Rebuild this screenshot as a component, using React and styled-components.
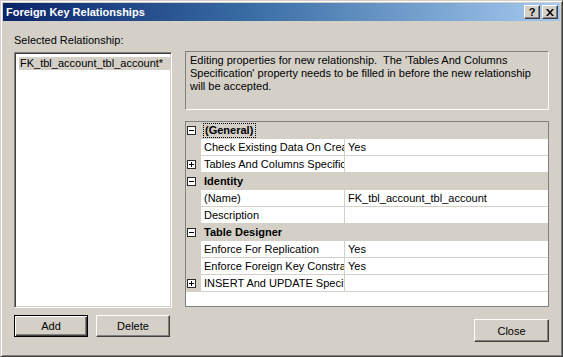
import React from "react";
import styled, { createGlobalStyle } from "styled-components";

const GlobalStyle = createGlobalStyle`
  html, body {
    margin: 0;
    padding: 0;
    background: #d4d0c8;
  }
  * {
    box-sizing: border-box;
  }
`;

const FONT = `"Liberation Sans", Arial, sans-serif`;

const rows = [
  { type: "cat", label: "(General)", focused: true },
  { type: "prop", name: "Check Existing Data On Create Or Re-Enabling", value: "Yes" },
  { type: "prop", name: "Tables And Columns Specification", value: "", expand: "plus" },
  { type: "cat", label: "Identity" },
  { type: "prop", name: "(Name)", value: "FK_tbl_account_tbl_account" },
  { type: "prop", name: "Description", value: "" },
  { type: "cat", label: "Table Designer" },
  { type: "prop", name: "Enforce For Replication", value: "Yes" },
  { type: "prop", name: "Enforce Foreign Key Constraint", value: "Yes" },
  { type: "prop", name: "INSERT And UPDATE Specification", value: "", expand: "plus" },
];

function Expander({ kind }) {
  return (
    <svg width="9" height="9" viewBox="0 0 9 9">
      <rect x="0.5" y="0.5" width="8" height="8" fill="#fff" stroke="#2b2b2b" />
      <line x1="2" y1="4.5" x2="7" y2="4.5" stroke="#000" />
      {kind === "plus" && <line x1="4.5" y1="2" x2="4.5" y2="7" stroke="#000" />}
    </svg>
  );
}

export default function App() {
  return (
    <>
      <GlobalStyle />
      <Window>
        <TitleBar>
          <Title>Foreign Key Relationships</Title>
          <CaptionButtons>
            <CaptionButton>?</CaptionButton>
            <CaptionButton>
              <svg width="8" height="7" viewBox="0 0 8 7">
                <path d="M0 0h2l2 2.5L6 0h2L5 3.5 8 7H6L4 4.5 2 7H0l3-3.5z" fill="#000" />
              </svg>
            </CaptionButton>
          </CaptionButtons>
        </TitleBar>
        <Content>
          <LeftColumn>
            <Label>Selected Relationship:</Label>
            <ListBox>
              <ListItem selected>FK_tbl_account_tbl_account*</ListItem>
            </ListBox>
            <ButtonRow>
              <Button isDefault>Add</Button>
              <Button>Delete</Button>
            </ButtonRow>
          </LeftColumn>
          <RightColumn>
            <Description>
              Editing properties for new relationship.&nbsp; The 'Tables And Columns
              Specification' property needs to be filled in before the new relationship
              will be accepted.
            </Description>
            <PropertyGrid>
              {rows.map((r, i) =>
                r.type === "cat" ? (
                  <CategoryRow key={i}>
                    <Gutter>
                      <Expander kind="minus" />
                    </Gutter>
                    <CategoryLabel focused={r.focused}>{r.label}</CategoryLabel>
                  </CategoryRow>
                ) : (
                  <PropRow key={i}>
                    <Gutter>{r.expand && <Expander kind={r.expand} />}</Gutter>
                    <NameCell>{r.name}</NameCell>
                    <ValueCell>{r.value}</ValueCell>
                  </PropRow>
                )
              )}
            </PropertyGrid>
            <CloseRow>
              <Button wide>Close</Button>
            </CloseRow>
          </RightColumn>
        </Content>
      </Window>
    </>
  );
}

const Window = styled.div`
  width: 563px;
  height: 357px;
  background: #d4d0c8;
  border: 1px solid;
  border-color: #d4d0c8 #404040 #404040 #d4d0c8;
  box-shadow: inset 1px 1px #ffffff, inset -1px -1px #808080;
  padding: 2px;
  font-family: ${FONT};
  font-size: 11px;
  color: #000;
  display: flex;
  flex-direction: column;
`;

const TitleBar = styled.div`
  height: 18px;
  display: flex;
  align-items: center;
  justify-content: space-between;
  padding: 0 2px 0 3px;
  background: linear-gradient(to right, #0a246a 0%, #3a6ea5 45%, #a6caf0 100%);
`;

const Title = styled.div`
  color: #fff;
  font-weight: bold;
  font-size: 11px;
`;

const CaptionButtons = styled.div`
  display: flex;
  gap: 2px;
`;

const CaptionButton = styled.div`
  width: 16px;
  height: 14px;
  background: #d4d0c8;
  border: 1px solid;
  border-color: #fff #404040 #404040 #fff;
  box-shadow: inset -1px -1px #808080;
  display: flex;
  align-items: center;
  justify-content: center;
  font-weight: bold;
  font-size: 11px;
  line-height: 1;
`;

const Content = styled.div`
  flex: 1;
  display: grid;
  grid-template-columns: 158px 364px;
  column-gap: 13px;
  padding: 12px 0 0 11px;
`;

const LeftColumn = styled.div`
  display: flex;
  flex-direction: column;
`;

const Label = styled.div`
  height: 14px;
  line-height: 14px;
  margin-bottom: 5px;
  white-space: nowrap;
`;

const ListBox = styled.div`
  height: 256px;
  background: #fff;
  border: 1px solid;
  border-color: #808080 #fff #fff #808080;
  box-shadow: inset 1px 1px #404040, inset -1px -1px #d4d0c8;
  padding: 4px 0 2px 4px;
`;

const ListItem = styled.div`
  height: 13px;
  line-height: 13px;
  padding-left: 1px;
  background: ${(p) => (p.selected ? "#d4d0c8" : "transparent")};
  white-space: nowrap;
  overflow: hidden;
`;

const ButtonRow = styled.div`
  display: flex;
  gap: 8px;
  margin-top: 7px;
`;

const Button = styled.div`
  width: ${(p) => (p.wide ? "75px" : "74px")};
  height: ${(p) => (p.wide ? "23px" : "22px")};
  display: flex;
  align-items: center;
  justify-content: center;
  background: #d4d0c8;
  border: 1px solid;
  border-color: ${(p) => (p.isDefault ? "#000" : "#fff #404040 #404040 #fff")};
  box-shadow: ${(p) =>
    p.isDefault
      ? "inset 1px 1px #fff, inset -1px -1px #404040, inset -2px -2px #808080"
      : "inset -1px -1px #808080"};
`;

const RightColumn = styled.div`
  display: flex;
  flex-direction: column;
`;

const Description = styled.div`
  margin-top: 18px;
  height: 59px;
  border: 1px solid;
  border-color: #808080 #fff #fff #808080;
  padding: 2px 4px 0 4px;
  line-height: 13px;
`;

const PropertyGrid = styled.div`
  margin-top: 11px;
  height: 186px;
  background: #fff;
  border: 1px solid #808080;
  display: flex;
  flex-direction: column;
`;

const CategoryRow = styled.div`
  height: 17px;
  flex-shrink: 0;
  display: flex;
  align-items: center;
  background: #d4d0c8;
`;

const PropRow = styled.div`
  height: 17px;
  flex-shrink: 0;
  display: flex;
`;

const Gutter = styled.div`
  width: 15px;
  height: 17px;
  flex-shrink: 0;
  background: #d4d0c8;
  display: flex;
  align-items: center;
  padding-left: 1px;
`;

const CategoryLabel = styled.div`
  font-weight: bold;
  margin-left: ${(p) => (p.focused ? "2px" : "3px")};
  padding: ${(p) => (p.focused ? "0 2px 0 1px" : "0")};
  height: 15px;
  line-height: ${(p) => (p.focused ? "13px" : "15px")};
  border: ${(p) => (p.focused ? "1px dotted #000" : "none")};
`;

const NameCell = styled.div`
  width: 144px;
  flex-shrink: 0;
  padding-left: 3px;
  line-height: 16px;
  border-right: 1px solid #d4d0c8;
  border-bottom: 1px solid #d4d0c8;
  white-space: nowrap;
  overflow: hidden;
`;

const ValueCell = styled.div`
  flex: 1;
  padding-left: 3px;
  line-height: 16px;
  border-bottom: 1px solid #d4d0c8;
  white-space: nowrap;
  overflow: hidden;
`;

const CloseRow = styled.div`
  display: flex;
  justify-content: flex-end;
  margin-top: 12px;
`;
